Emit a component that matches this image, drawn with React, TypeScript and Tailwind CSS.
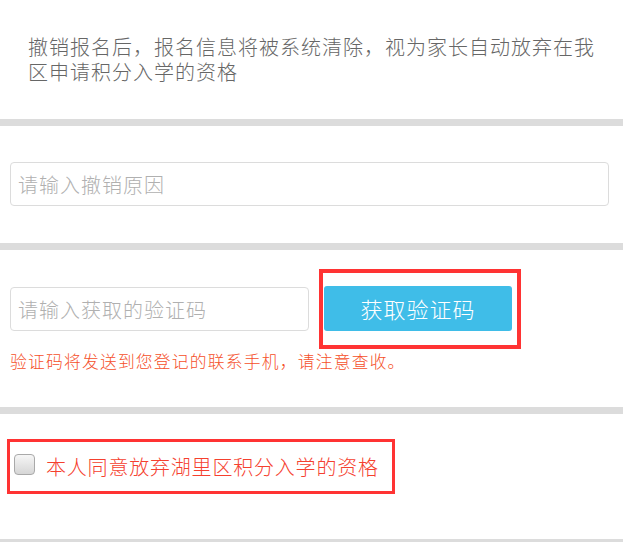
import React from "react";

const cjk = "font-['Noto_Sans_CJK_SC','Noto_Sans',sans-serif] font-light";

function Divider() {
  return <div className="h-[7px] bg-[#dcdcdc]" />;
}

export default function App() {
  return (
    <div className={`w-[623px] h-[542px] overflow-hidden bg-white ${cjk}`}>
      <section className="pt-[34px] pb-[35px] pl-[28px] pr-[20px]">
        <p className="text-[20px] leading-[25px] tracking-[1px] text-[#666]">
          撤销报名后，报名信息将被系统清除，视为家长自动放弃在我区申请积分入学的资格
        </p>
      </section>
      <Divider />

      <section className="pt-[36px] pb-[37px] pl-[10px] pr-[14px]">
        <input
          type="text"
          placeholder="请输入撤销原因"
          className="block w-full h-[44px] rounded-[4px] border border-[#dcdcdc] pl-[7px] text-[20px] tracking-[1px] font-light text-[#555] placeholder:text-[#b0b0b0] outline-none"
        />
      </section>
      <Divider />

      <section className="pt-[19px] pb-[35px] pl-[10px]">
        <div className="flex items-center gap-[10px]">
          <input
            type="text"
            placeholder="请输入获取的验证码"
            className="block w-[299px] h-[44px] rounded-[4px] border border-[#dcdcdc] pl-[7px] text-[20px] tracking-[1px] font-light text-[#555] placeholder:text-[#b0b0b0] outline-none"
          />
          <div className="border-[4px] border-[#f33] pt-[13px] pb-[14px] pl-[1px] pr-[5px]">
            <button className="w-[188px] h-[45px] rounded-[3px] bg-[#3fbde8] text-white text-[22px] tracking-[1px] font-light">
              获取验证码
            </button>
          </div>
        </div>
        <p className="mt-[1px] text-[16.8px] leading-[22px] tracking-[1.2px] text-[#f5502a]">
          验证码将发送到您登记的联系手机，请注意查收。
        </p>
      </section>
      <Divider />

      <section className="pt-[25px] pb-[45px] pl-[7px]">
        <label className="inline-flex items-center w-[388px] h-[55px] border-[3px] border-[#f33] pl-[4px]">
          <span className="mb-[5px] h-[21px] w-[21px] shrink-0 rounded-[4px] border border-[#a9a9a9] bg-gradient-to-b from-[#f6f6f6] to-[#d6d6d6]" />
          <span className="ml-[11px] text-[20px] leading-[25px] tracking-[0.8px] text-[#f5402e]">
            本人同意放弃湖里区积分入学的资格
          </span>
        </label>
      </section>
      <Divider />
    </div>
  );
}
